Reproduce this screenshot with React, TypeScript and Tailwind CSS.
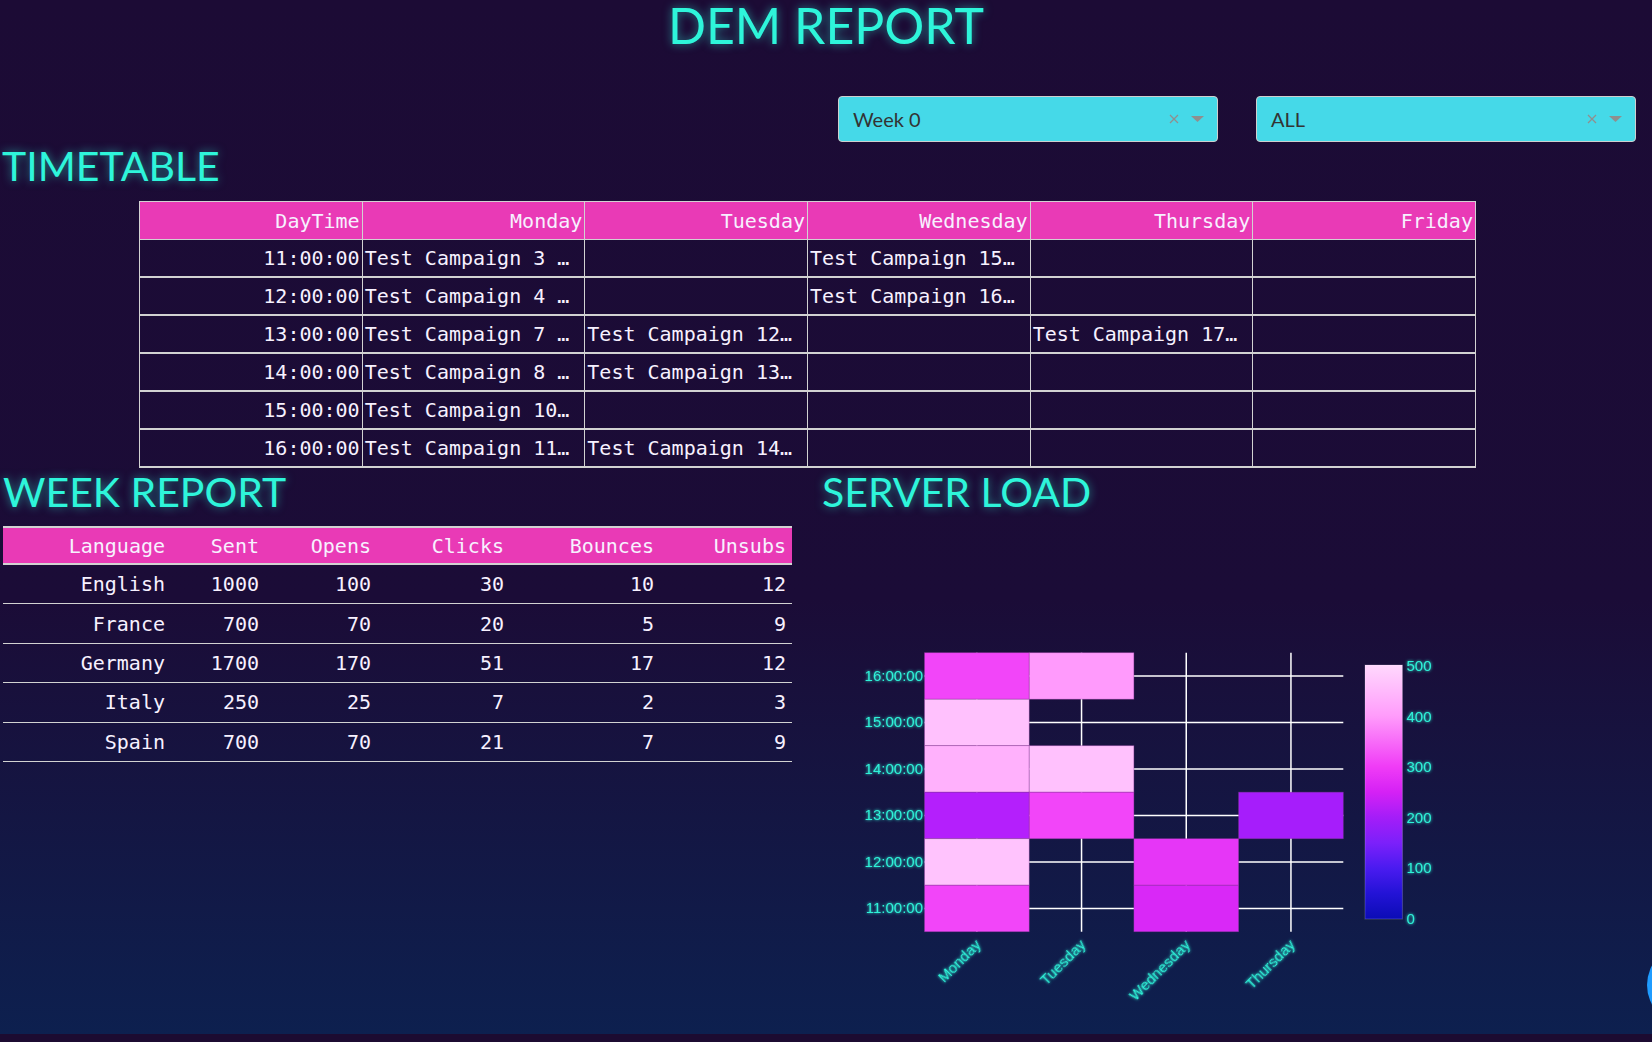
import React from 'react';

const days = ['Monday', 'Tuesday', 'Wednesday', 'Thursday', 'Friday'];

const timetable: { time: string; cells: string[] }[] = [
  { time: '11:00:00', cells: ['Test Campaign 3 …', '', 'Test Campaign 15…', '', ''] },
  { time: '12:00:00', cells: ['Test Campaign 4 …', '', 'Test Campaign 16…', '', ''] },
  { time: '13:00:00', cells: ['Test Campaign 7 …', 'Test Campaign 12…', '', 'Test Campaign 17…', ''] },
  { time: '14:00:00', cells: ['Test Campaign 8 …', 'Test Campaign 13…', '', '', ''] },
  { time: '15:00:00', cells: ['Test Campaign 10…', '', '', '', ''] },
  { time: '16:00:00', cells: ['Test Campaign 11…', 'Test Campaign 14…', '', '', ''] },
];

const weekCols = [
  { label: 'Language', w: 'w-[168px]' },
  { label: 'Sent', w: 'w-[94px]' },
  { label: 'Opens', w: 'w-[112px]' },
  { label: 'Clicks', w: 'w-[133px]' },
  { label: 'Bounces', w: 'w-[150px]' },
  { label: 'Unsubs', w: 'w-[132px]' },
];

const weekRows = [
  ['English', '1000', '100', '30', '10', '12'],
  ['France', '700', '70', '20', '5', '9'],
  ['Germany', '1700', '170', '51', '17', '12'],
  ['Italy', '250', '25', '7', '2', '3'],
  ['Spain', '700', '70', '21', '7', '9'],
];

// heatmap cells: [column, row from top (0 = 16:00)], colour
const heat: { c: number; r: number; fill: string }[] = [
  { c: 0, r: 0, fill: '#f245f9' },
  { c: 1, r: 0, fill: '#ff9afc' },
  { c: 0, r: 1, fill: '#ffc1fd' },
  { c: 0, r: 2, fill: '#ffb1fc' },
  { c: 1, r: 2, fill: '#ffc1fd' },
  { c: 0, r: 3, fill: '#b41ffc' },
  { c: 1, r: 3, fill: '#f245f9' },
  { c: 3, r: 3, fill: '#a61dfb' },
  { c: 0, r: 4, fill: '#ffc3fd' },
  { c: 2, r: 4, fill: '#e636f7' },
  { c: 0, r: 5, fill: '#f245f9' },
  { c: 2, r: 5, fill: '#d928f7' },
];

const hours = ['16:00:00', '15:00:00', '14:00:00', '13:00:00', '12:00:00', '11:00:00'];

function Select({ value }: { value: string }) {
  return (
    <div className="flex h-[46px] w-[380px] items-center rounded-[4px] border border-[#cfcfcf] bg-[#45d9e8] pl-[14px] pr-[13px]">
      <span className="flex-1 text-[20px] text-[#333333]">{value}</span>
      <svg width="10" height="10" viewBox="0 0 10 10" className="mr-[12px]">
        <path d="M1 1 L9 9 M9 1 L1 9" stroke="#8f8f8f" strokeWidth="1.3" />
      </svg>
      <svg width="13" height="6" viewBox="0 0 13 6">
        <path d="M0 0 H13 L6.5 6 Z" fill="#8f8f8f" />
      </svg>
    </div>
  );
}

function HeatMap() {
  const px0 = 104.5;
  const colW = 104.7;
  const py0 = 140.7;
  const rowH = 46.5;
  const right = px0 + colW * 4;
  const bottom = py0 + rowH * 6;
  const ticks = [500, 400, 300, 200, 100, 0];
  return (
    <svg width="832" height="520" className="block" style={{ fontFamily: '"Liberation Sans", Arial, sans-serif' }}>
      <defs>
        <linearGradient id="cbar" x1="0" y1="0" x2="0" y2="1">
          <stop offset="0%" stopColor="#ffd8fd" />
          <stop offset="20%" stopColor="#ff9cfb" />
          <stop offset="40%" stopColor="#f03cf6" />
          <stop offset="50%" stopColor="#d521f5" />
          <stop offset="60%" stopColor="#a41df8" />
          <stop offset="70%" stopColor="#7c20fa" />
          <stop offset="80%" stopColor="#4a1bf0" />
          <stop offset="90%" stopColor="#2313d6" />
          <stop offset="100%" stopColor="#0b0cb5" />
        </linearGradient>
        <filter id="glow" x="-20%" y="-50%" width="140%" height="200%">
          <feGaussianBlur stdDeviation="1.6" result="b" />
          <feMerge>
            <feMergeNode in="b" />
            <feMergeNode in="SourceGraphic" />
          </feMerge>
        </filter>
      </defs>

      {/* grid */}
      {[0, 1, 2, 3].map((i) => (
        <line key={'v' + i} x1={px0 + colW * i + colW / 2} x2={px0 + colW * i + colW / 2} y1={py0} y2={bottom} stroke="#ffffff" strokeWidth="1.5" />
      ))}
      {hours.map((h, j) => (
        <line key={'h' + h} x1={px0} x2={right} y1={py0 + rowH * j + rowH / 2} y2={py0 + rowH * j + rowH / 2} stroke="#ffffff" strokeWidth="1.5" />
      ))}

      {/* cells */}
      {heat.map((h, i) => (
        <rect key={i} x={px0 + colW * h.c} y={py0 + rowH * h.r} width={colW} height={rowH} fill={h.fill} stroke="#8e3a9c" strokeOpacity="0.45" strokeWidth="0.8" />
      ))}

      {/* y labels */}
      {hours.map((h, j) => (
        <text key={h} x={px0 - 1.5} y={py0 + rowH * j + rowH / 2 + 5} textAnchor="end" fontSize="15" fill="#2ef2d8" filter="url(#glow)">
          {h}
        </text>
      ))}

      {/* x labels */}
      {['Monday', 'Tuesday', 'Wednesday', 'Thursday'].map((d, i) => (
        <text key={d} transform={`translate(${px0 + colW * i + colW / 2 + 5},${bottom + 14}) rotate(-45)`} textAnchor="end" fontSize="15" fill="#2ef2d8" filter="url(#glow)">
          {d}
        </text>
      ))}

      {/* colour bar */}
      <rect x="545" y="153" width="37.4" height="254" fill="url(#cbar)" stroke="#ffffff" strokeOpacity="0.2" strokeWidth="1" />
      {ticks.map((t, k) => (
        <text key={t} x="586.5" y={154 + k * 50.5 + 5} fontSize="15" fill="#2ef2d8" filter="url(#glow)">
          {t}
        </text>
      ))}
    </svg>
  );
}

export default function App() {
  return (
    <div className="relative min-h-screen overflow-hidden bg-[#1c0b31]" style={{ fontFamily: 'Lato, "Open Sans", sans-serif' }}>
      <main className="h-[1034px] bg-[linear-gradient(to_bottom,#1c0b35_0%,#1b0c37_58%,#0d204f_100%)]">
        <h1 className="text-center text-[50px] leading-none text-[#2ef5da] [text-shadow:0_0_10px_rgba(46,245,218,0.55)]">
          DEM REPORT
        </h1>

        <div className="mt-[46px] flex justify-end gap-[38px] pr-[16px]">
          <Select value="Week 0" />
          <Select value="ALL" />
        </div>

        <h2 className="mt-[3px] pl-[2px] text-[41px] leading-none text-[#2ef5da] [text-shadow:0_0_10px_rgba(46,245,218,0.55)]">
          TIMETABLE
        </h2>

        {/* timetable */}
        <div className="ml-[139px] mt-[15px] w-[1337px] border-l border-t border-[#d2d2d2] text-[20px] text-[#f7f1ff]" style={{ fontFamily: '"DejaVu Sans Mono", monospace' }}>
          <div className="flex h-[38px] border-b border-[#d2d2d2] bg-[#e93ab6]">
            {['DayTime', ...days].map((d) => (
              <div key={d} className="flex w-[222.67px] items-center justify-end border-r border-[#d2d2d2] pr-[2px]">
                {d}
              </div>
            ))}
          </div>
          {timetable.map((row) => (
            <div key={row.time} className="flex h-[38px] border-b-2 border-[#d2d2d2]">
              <div className="flex w-[222.67px] items-center justify-end border-r border-[#d2d2d2] pr-[2px]">{row.time}</div>
              {row.cells.map((c, i) => (
                <div key={i} className="flex w-[222.67px] items-center overflow-hidden whitespace-nowrap border-r border-[#d2d2d2] pl-[2px]">
                  {c}
                </div>
              ))}
            </div>
          ))}
        </div>

        <div className="mt-[3px] flex">
          {/* week report */}
          <div className="w-[820px] pl-[3px]">
            <h2 className="text-[41px] leading-none text-[#2ef5da] [text-shadow:0_0_10px_rgba(46,245,218,0.55)]">
              WEEK REPORT
            </h2>
            <div className="mt-[14px] w-[789px] text-[20px] text-[#f7f1ff]" style={{ fontFamily: '"DejaVu Sans Mono", monospace' }}>
              <div className="flex h-[39px] border-y-2 border-[#d2d2d2] bg-[#e93ab6]">
                {weekCols.map((c) => (
                  <div key={c.label} className={`${c.w} flex items-center justify-end pr-[6px]`}>
                    {c.label}
                  </div>
                ))}
              </div>
              {weekRows.map((r) => (
                <div key={r[0]} className="flex h-[39.4px] border-b border-[#d2d2d2]">
                  {r.map((v, i) => (
                    <div key={i} className={`${weekCols[i].w} flex items-center justify-end pr-[6px]`}>
                      {v}
                    </div>
                  ))}
                </div>
              ))}
            </div>
          </div>

          {/* server load */}
          <div className="flex-1">
            <h2 className="pl-[2px] text-[41px] leading-none text-[#2ef5da] [text-shadow:0_0_10px_rgba(46,245,218,0.55)]">
              SERVER LOAD
            </h2>
            <HeatMap />
          </div>
        </div>
      </main>

      <div className="absolute left-[1647px] top-[945px] h-20 w-20 rounded-full bg-[#1f9cff]" />
    </div>
  );
}
